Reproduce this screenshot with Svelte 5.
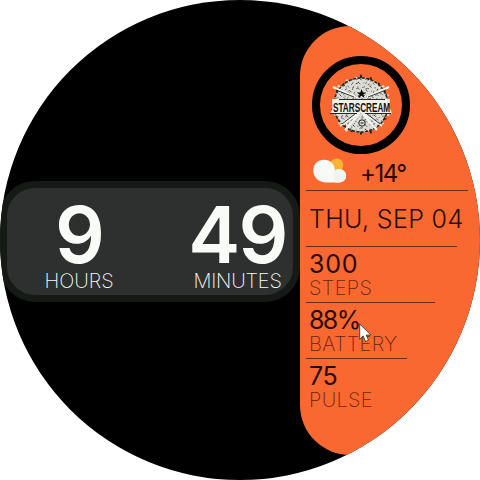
<script>
  const stats = [
    { value: '300', label: 'STEPS', line: 129, valueSpacing: 0.8, labelSpacing: 0.35 },
    { value: '88%', label: 'BATTERY', line: 101, valueSpacing: -1.6, labelSpacing: 0.3 },
    { value: '75', label: 'PULSE', line: 0, valueSpacing: -0.4, labelSpacing: 0.3 }
  ];
  const spikes = Array.from({ length: 36 }, (_, i) => {
    const a = (i * Math.PI) / 18;
    const r = 27 + ((i * 7) % 5) * 0.8;
    return { x1: 49 + 20 * Math.cos(a), y1: 49 + 20 * Math.sin(a), x2: 49 + r * Math.cos(a), y2: 49 + r * Math.sin(a) };
  });
  const flecks = Array.from({ length: 230 }, (_, i) => {
    const a = i * 2.39996;
    const r = 28 * Math.sqrt(i / 230);
    return { x: 49 + r * Math.cos(a), y: 49 + r * Math.sin(a), dx: ((i * 13) % 5) - 2, dy: ((i * 7) % 5) - 2, c: i % 3 ? '#4c4e49' : '#111210' };
  });
</script>

<main class="watch">
  <section class="time">
    <div class="unit hours">
      <span class="digits">9</span>
      <span class="caption">HOURS</span>
    </div>
    <div class="unit minutes">
      <span class="digits">49</span>
      <span class="caption">MINUTES</span>
    </div>
  </section>

  <aside class="panel">
    <svg class="emblem" viewBox="0 0 98 98">
      <circle cx="49" cy="49" r="45" fill="none" stroke="#000" stroke-width="8" />
      {#each spikes as s, i}
        <line x1={s.x1} y1={s.y1} x2={s.x2} y2={s.y2} stroke={i % 2 ? '#24241f' : '#deded5'} stroke-width="2" />
      {/each}
      <circle cx="49" cy="49" r="27" fill="#deded9" stroke="#20201c" stroke-width="1.5" stroke-dasharray="3 1.4" />
      {#each flecks as f}
        <path d="M{f.x} {f.y}l{f.dx} {f.dy}" stroke={f.c} stroke-width=".8" />
      {/each}
      <path d="M21 31L43 41M77 31L55 41M28 70L45 58M70 70L53 58M33 74L47 58M65 74L51 58" stroke="#f4f4ef" stroke-width="2" />
      <path d="M24 34L42 41M74 34L56 41M30 68L43 58M68 68L55 58" stroke="#22231f" stroke-width=".9" />
      <path d="M49.500 33l1.200 3.400h3.600l-2.900 2.100 1.100 3.400-3-2.100-3 2.100 1.100-3.400-2.900-2.100h3.600z" fill="#080808" />
      <circle cx="50" cy="67" r="3.200" fill="#ddd" stroke="#20201c" />
      <path d="M48.500 67h3" stroke="#111" stroke-width="1" />
      <path d="M20 43h58l-.5 8 2.500 6.500H18l2.500-5z" fill="#f0f0eb" />
      <path d="M27 43.500h46M18 57.500h27M53 57.500h26" stroke="#292923" stroke-width="1" />
      <g transform="translate(21 55.500) scale(.63 1)">
        <text x="0" y="0">STARSCREAM</text>
      </g>
    </svg>

    <div class="weather">
      <svg class="cloud" viewBox="0 0 34 26">
        <circle cx="23.700" cy="7" r="6.600" fill="#fdb233" />
        <path d="M11 1.700C4.700 1.700.3 6.300.3 12.200c0 7 5 11.800 12 12.200h13.800c4.200 0 7-2.900 7-6.700 0-4-3.200-6.600-7-6.400-1.900 0-3.200.5-4.300 1.200C22 6.200 17.400 1.700 11 1.700z" fill="#f8faf7" />
        <path d="M20 15c1.200-2.600 3.500-3.900 6.500-3.700 4 .2 6.600 3 6.600 6.400 0 3.800-3 6.700-7 6.700h-4" fill="#f0f3f0" />
      </svg>
      <span class="temp">+14°</span>
    </div>

    <div class="date">THU, SEP 04</div>

    {#each stats as s}
      <div class="stat">
        <span class="value" style="letter-spacing: {s.valueSpacing}px">{s.value}</span>
        <span class="label" style="letter-spacing: {s.labelSpacing}px">{s.label}</span>
        {#if s.line}<i class="rule" style="width: {s.line}px"></i>{/if}
      </div>
    {/each}
  </aside>

  <svg class="cursor" viewBox="0 0 13 20">
    <path d="M.7 1v15.300l3.500-3.300 2.300 5.500 3-1.300-2.300-5.200h4.700z" fill="#fff" stroke="#39251f" stroke-width=".8" />
  </svg>
</main>

<style>
  :global(body) { margin: 0; background: #fff; }
  .watch {
    position: relative;
    display: flex;
    align-items: center;
    width: 480px;
    height: 480px;
    overflow: hidden;
    border-radius: 50%;
    background: #000;
    font-family: Inter, "Open Sans", sans-serif;
    white-space: nowrap;
  }
  .time {
    box-sizing: border-box;
    display: flex;
    flex: none;
    justify-content: space-between;
    width: 300px;
    height: 121px;
    margin-top: 3px;
    padding: 16px 6px 0 37.500px;
    border: 7px solid #151a17;
    border-radius: 35px;
    background: #2e302f;
    color: #f9fbf9;
  }
  .unit { display: flex; flex-direction: column; align-items: center; }
  .digits { font-size: 78px; line-height: 62px; font-weight: 600; letter-spacing: -1.500px; }
  .caption { margin-top: 4px; font-size: 20px; line-height: 22px; font-weight: 200; }
  .minutes .caption { letter-spacing: -.2px; }
  .panel {
    box-sizing: border-box;
    display: flex;
    flex: none;
    flex-direction: column;
    width: 220px;
    height: 429px;
    padding: 30px 0 0 6px;
    border-radius: 50px;
    background: #f96830;
    color: #260b04;
  }
  .emblem { flex: none; width: 98px; height: 98px; margin-left: 6px; }
  .emblem text { font: 700 13px "Liberation Sans", sans-serif; fill: #10110e; }
  .weather { display: flex; flex: none; align-items: center; width: 162px; height: 36px; border-bottom: 1px solid #702a12; }
  .cloud { width: 34px; height: 26px; margin: 0 13px 2px 7px; }
  .temp { padding-top: 3px; font-size: 24px; line-height: 33px; font-weight: 400; letter-spacing: -1.500px; }
  .date { box-sizing: border-box; flex: none; width: 151px; height: 56px; padding-left: 3px; border-bottom: 1px solid #702a12; font-size: 25px; line-height: 56px; font-weight: 300; letter-spacing: .35px; }
  .stat { box-sizing: border-box; display: flex; flex: none; flex-direction: column; height: 56.300px; padding: 5px 0 0 3px; }
  .value { font-size: 25px; line-height: 25px; font-weight: 400; }
  .label { font-size: 20px; line-height: 23px; font-weight: 200; color: #6b240b; }
  .rule { height: 1px; margin: auto 0 0 -3px; background: #702a12; }
  .cursor { position: absolute; left: 359px; top: 323px; width: 13px; height: 20px; }
</style>
